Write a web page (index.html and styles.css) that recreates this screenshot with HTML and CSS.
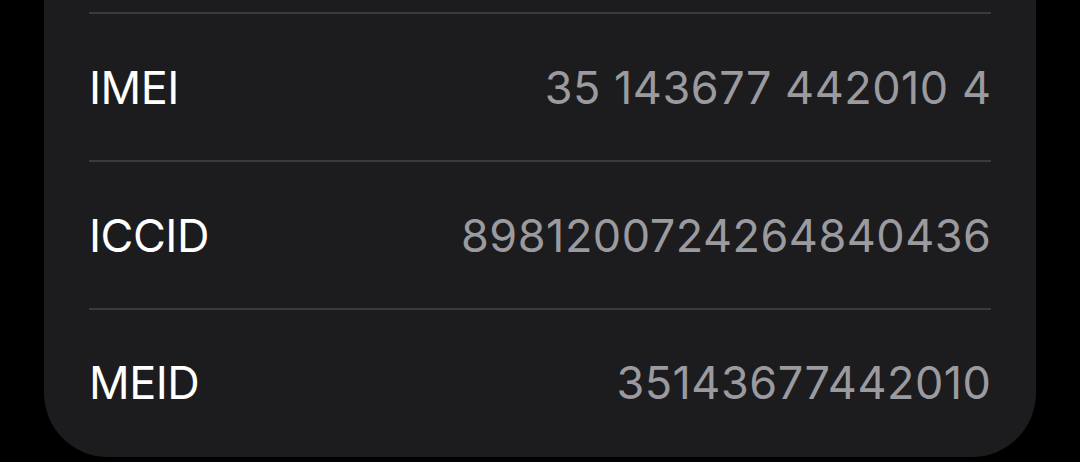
FILE: index.html
```html
<!DOCTYPE html>
<html>
<head>
<meta charset="utf-8">
<link rel="stylesheet" href="styles.css">
</head>
<body>
<div class="card">
  <div class="row"><span class="label">IMEI</span><span class="value">35 143677 442010 4</span></div>
  <div class="row"><span class="label">ICCID</span><span class="value">8981200724264840436</span></div>
  <div class="row"><span class="label">MEID</span><span class="value">35143677442010</span></div>
</div>
</body>
</html>
```
FILE: styles.css
```css
html, body {
  margin: 0;
  padding: 0;
  background: #000;
  width: 1080px;
  height: 462px;
  overflow: hidden;
}
.card {
  margin-left: 44px;
  width: 992px;
  height: 457px;
  background: #1c1c1e;
  border-radius: 0 0 64px 64px;
  padding-top: 12px;
  box-sizing: border-box;
  font-family: Inter, "Open Sans", sans-serif;
}
.row {
  margin-left: 45px;
  margin-right: 45px;
  height: 148px;
  border-top: 2px solid #3a3a3c;
  box-sizing: border-box;
  display: flex;
  align-items: center;
  justify-content: space-between;
  font-size: 45px;
}
.row:last-child {
  height: 147px;
}
.label {
  color: #ffffff;
  letter-spacing: -0.5px;
}
.value {
  color: #9a9a9f;
  letter-spacing: 0.5px;
  margin-right: -0.5px;
}
```
